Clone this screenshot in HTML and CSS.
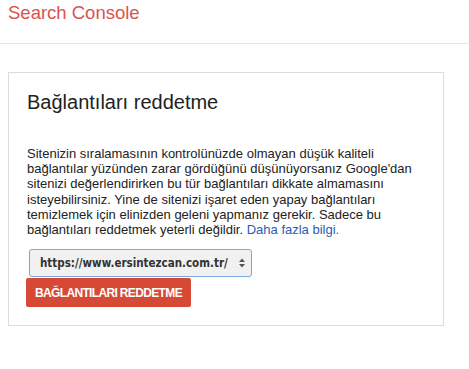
FILE: index.html
```html
<!DOCTYPE html>
<html lang="tr">
<head>
<meta charset="utf-8">
<title>Search Console</title>
<link rel="stylesheet" href="styles.css">
</head>
<body>
<header class="topbar">
  <div class="brand">Search Console</div>
</header>
<main class="content">
  <section class="card">
    <h1 class="card-title">Bağlantıları reddetme</h1>
    <p class="card-text">Sitenizin sıralamasının kontrolünüzde olmayan düşük kaliteli bağlantılar yüzünden zarar gördüğünü düşünüyorsanız Google'dan sitenizi değerlendirirken bu tür bağlantıları dikkate almamasını isteyebilirsiniz. Yine de sitenizi işaret eden yapay bağlantıları temizlemek için elinizden geleni yapmanız gerekir. Sadece bu bağlantıları reddetmek yeterli değildir. <a class="link" href="#">Daha fazla bilgi.</a></p>
    <div class="select">
      <span class="select-value">https://www.ersintezcan.com.tr/</span>
      <svg class="select-arrows" width="8" height="12" viewBox="0 0 8 12"><path d="M4 1.5 L7 5 H1 Z M4 10.5 L7 7 H1 Z" fill="#555"/></svg>
    </div>
    <button class="btn-red">BAĞLANTILARI REDDETME</button>
  </section>
</main>
</body>
</html>
```
FILE: styles.css
```css
* { box-sizing: border-box; }
body {
  margin: 0;
  font-family: "Liberation Sans", Arial, sans-serif;
  color: #222;
  background: #fff;
}
.topbar {
  height: 44px;
  border-bottom: 1px solid #e5e5e5;
  padding: 2px 0 0 8px;
}
.brand {
  font-size: 18.5px;
  line-height: 22px;
  color: #d9534f;
}
.content {
  padding: 28px 26px 0 8px;
}
.card {
  width: 436px;
  height: 254px;
  border: 1px solid #dcdcdc;
  padding: 16px 18px 0 18px;
  display: flex;
  flex-direction: column;
  align-items: flex-start;
}
.card-title {
  margin: 0;
  font-size: 20px;
  font-weight: normal;
  line-height: 26px;
  color: #222;
}
.card-text {
  margin: 31px 0 0 0;
  width: 385px;
  font-size: 13px;
  line-height: 15.2px;
  color: #222;
}
.link {
  color: #2a5db0;
  text-decoration: none;
}
.select {
  margin: 12px 0 0 2px;
  width: 223px;
  height: 28px;
  border: 1px solid #7aa7e0;
  border-radius: 3px;
  background: #f1f1f1;
  display: flex;
  align-items: center;
  justify-content: space-between;
  padding: 0 5px 0 10px;
}
.select-value {
  font-family: "DejaVu Sans Condensed", "DejaVu Sans", Verdana, sans-serif;
  font-weight: bold;
  font-size: 11.5px;
  color: #333;
  white-space: nowrap;
}
.select-arrows { display: block; flex: none; }
.btn-red {
  margin: 1px 0 0 -1px;
  height: 29px;
  width: 165px;
  border: 0;
  border-radius: 2px;
  background: #d64937;
  color: #fff;
  font-family: "Liberation Sans", Arial, sans-serif;
  font-weight: bold;
  font-size: 12px;
  letter-spacing: -0.65px;
  white-space: nowrap;
  padding: 0;
  text-align: center;
}
```
